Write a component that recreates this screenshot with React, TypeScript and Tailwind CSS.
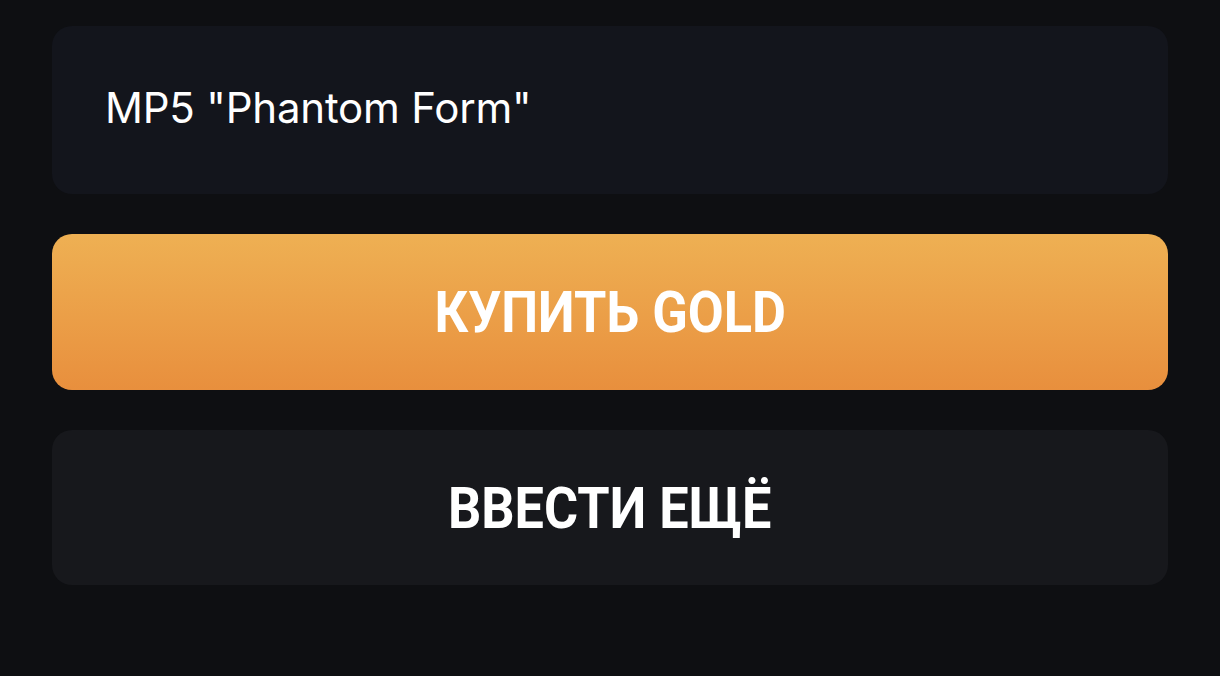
import React from "react";

export default function App() {
  return (
    <div className="w-[1220px] h-[676px] bg-[#0e0f12] px-[52px] pt-[26px] flex flex-col overflow-hidden">
      <div className="h-[168px] rounded-[20px] bg-[#13151c] flex items-center px-[53px]">
        <span className="text-white text-[42px] tracking-[-0.2px] leading-none pb-[4px] [font-family:Inter,'Noto_Sans',sans-serif]">
          MP5 "Phantom Form"
        </span>
      </div>
      <button className="mt-[40px] h-[156px] rounded-[20px] bg-gradient-to-b from-[#eeb053] to-[#e88f3d] flex items-center justify-center">
        <span className="inline-block scale-x-[0.9] text-white font-bold text-[58px] leading-none [font-family:Roboto,'Liberation_Sans',sans-serif]">
          КУПИТЬ GOLD
        </span>
      </button>
      <button className="mt-[40px] h-[155px] rounded-[20px] bg-[#17181c] flex items-center justify-center">
        <span className="inline-block scale-x-[0.9] text-white font-bold text-[58px] leading-none [font-family:Roboto,'Liberation_Sans',sans-serif]">
          ВВЕСТИ ЕЩЁ
        </span>
      </button>
    </div>
  );
}
